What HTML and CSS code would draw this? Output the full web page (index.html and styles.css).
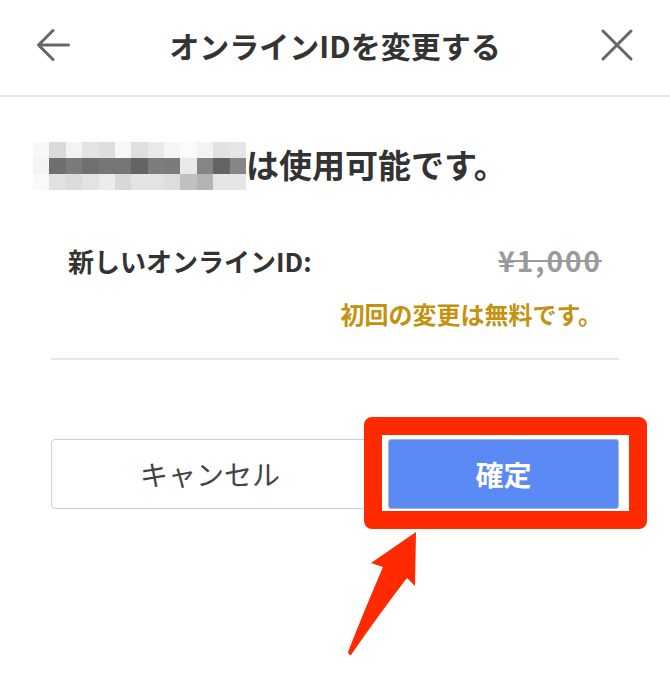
FILE: index.html
```html
<!DOCTYPE html>
<html lang="ja">
<head>
<meta charset="utf-8">
<title>オンラインIDを変更する</title>
<link rel="stylesheet" href="styles.css">
</head>
<body>
<header class="topbar">
  <button class="icon-btn" aria-label="戻る">
    <svg viewBox="0 0 34 34" width="34" height="34" class="icon">
      <path d="M17 2.5 L2.5 17 L17 31.5 M2.5 17 H32.5" />
    </svg>
  </button>
  <h1 class="title">オンラインIDを変更する</h1>
  <button class="icon-btn" aria-label="閉じる">
    <svg viewBox="0 0 34 34" width="34" height="34" class="icon">
      <path d="M3 3 L31 31 M31 3 L3 31" />
    </svg>
  </button>
</header>

<main class="content">
  <div class="avail">
    <svg class="masked-id" viewBox="0 0 13 3" width="213" height="48" preserveAspectRatio="none" shape-rendering="crispEdges" aria-hidden="true">
      <rect x="0" y="0" width="1" height="1" fill="#f8f8f8"/><rect x="1" y="0" width="1" height="1" fill="#dadada"/><rect x="2" y="0" width="1" height="1" fill="#f3f3f3"/><rect x="3" y="0" width="1" height="1" fill="#e4e4e4"/><rect x="4" y="0" width="1" height="1" fill="#dddddd"/><rect x="5" y="0" width="1" height="1" fill="#f7f7f7"/><rect x="6" y="0" width="1" height="1" fill="#dfdfdf"/><rect x="7" y="0" width="1" height="1" fill="#e9e9e9"/><rect x="8" y="0" width="1" height="1" fill="#f5f5f5"/><rect x="9" y="0" width="1" height="1" fill="#fbfbfb"/><rect x="10" y="0" width="1" height="1" fill="#f3f3f3"/><rect x="11" y="0" width="1" height="1" fill="#e2e2e2"/><rect x="12" y="0" width="1" height="1" fill="#e5e5e5"/>
      <rect x="0" y="1" width="1" height="1" fill="#f4f4f4"/><rect x="1" y="1" width="1" height="1" fill="#6f6f6f"/><rect x="2" y="1" width="1" height="1" fill="#7b7b7b"/><rect x="3" y="1" width="1" height="1" fill="#707070"/><rect x="4" y="1" width="1" height="1" fill="#767676"/><rect x="5" y="1" width="1" height="1" fill="#767676"/><rect x="6" y="1" width="1" height="1" fill="#646464"/><rect x="7" y="1" width="1" height="1" fill="#7d7d7d"/><rect x="8" y="1" width="1" height="1" fill="#7b7b7b"/><rect x="9" y="1" width="1" height="1" fill="#e9e9e9"/><rect x="10" y="1" width="1" height="1" fill="#858585"/><rect x="11" y="1" width="1" height="1" fill="#646464"/><rect x="12" y="1" width="1" height="1" fill="#868686"/>
      <rect x="0" y="2" width="1" height="1" fill="#fafafa"/><rect x="1" y="2" width="1" height="1" fill="#e1e1e1"/><rect x="2" y="2" width="1" height="1" fill="#dbdbdb"/><rect x="3" y="2" width="1" height="1" fill="#e3e3e3"/><rect x="4" y="2" width="1" height="1" fill="#ebebeb"/><rect x="5" y="2" width="1" height="1" fill="#d8d8d8"/><rect x="6" y="2" width="1" height="1" fill="#e3e3e3"/><rect x="7" y="2" width="1" height="1" fill="#e3e3e3"/><rect x="8" y="2" width="1" height="1" fill="#dddddd"/><rect x="9" y="2" width="1" height="1" fill="#c0c0c0"/><rect x="10" y="2" width="1" height="1" fill="#b4b4b4"/><rect x="11" y="2" width="1" height="1" fill="#e6e6e6"/><rect x="12" y="2" width="1" height="1" fill="#e6e6e6"/>
    </svg>
    <span class="avail-text">は使用可能です。</span>
  </div>

  <div class="price-row">
    <span class="label">新しいオンラインID:</span>
    <span class="price">¥1,000</span>
  </div>
  <p class="note">初回の変更は無料です。</p>

  <div class="divider"></div>

  <div class="actions">
    <button class="btn btn-cancel">キャンセル</button>
    <button class="btn btn-confirm">確定</button>
    <div class="highlight" aria-hidden="true"></div>
    <svg class="pointer" viewBox="0 0 80 135" width="80" height="135" aria-hidden="true">
      <path d="M76 7 L31 38 L43 42 Q24 86 8 127 Q9 131 11 130 Q40 88 67 53 L75 61 Z" />
    </svg>
  </div>
</main>
</body>
</html>
```

FILE: styles.css
```css
* {
  box-sizing: border-box;
}

html,
body {
  background: #ffffff;
}

body {
  margin: 0;
  width: 670px;
  min-height: 700px;
  color: #333333;
  font-family: "Noto Sans CJK JP", "Noto Sans", sans-serif;
}

.topbar {
  height: 97px;
  border-bottom: 2px solid #e6e6e6;
  display: flex;
  align-items: center;
  justify-content: space-between;
  padding: 0 36px 5px;
}

.icon-btn {
  width: 34px;
  height: 34px;
  padding: 0;
  border: 0;
  background: none;
  display: flex;
}

.icon {
  fill: none;
  stroke: #666666;
  stroke-width: 3;
  stroke-linecap: round;
  stroke-linejoin: round;
}

.title {
  margin: 0;
  font-size: 30px;
  font-weight: 700;
  line-height: 1;
  color: #333333;
}

.content {
  padding: 0 51px 190px;
}

.avail {
  display: flex;
  align-items: center;
  height: 48px;
  margin: 45px 0 0 -18px;
}

.masked-id {
  flex: none;
  display: block;
}

.avail-text {
  font-size: 33px;
  font-weight: 700;
  line-height: 48px;
  color: #333333;
  white-space: nowrap;
  position: relative;
  top: -2px;
}

.price-row {
  display: flex;
  align-items: center;
  justify-content: space-between;
  height: 40px;
  margin-top: 50px;
  padding: 0 17px;
}

.label {
  font-size: 26px;
  font-weight: 700;
  color: #333333;
}

.price {
  font-size: 28px;
  font-weight: 700;
  color: #9a9a9a;
  letter-spacing: 2px;
  text-decoration: line-through;
  text-decoration-thickness: 2px;
}

.note {
  margin: 19px 0 0;
  padding-right: 17px;
  font-size: 24px;
  font-weight: 700;
  line-height: 30px;
  text-align: right;
  color: #c4920f;
}

.divider {
  margin-top: 29px;
  border-top: 2px solid #e8e8e8;
}

.actions {
  position: relative;
  display: flex;
  gap: 19px;
  height: 70px;
  margin-top: 79px;
}

.btn {
  height: 70px;
  padding: 0;
  font-family: inherit;
  font-size: 28px;
  cursor: pointer;
}

.btn-cancel {
  flex: 1;
  background: #ffffff;
  border: 1.5px solid #cfcfcf;
  border-radius: 4px;
  color: #444444;
  font-weight: 400;
}

.btn-confirm {
  flex: none;
  width: 231px;
  background: #5b8af5;
  border: 1px solid #aab6c9;
  border-radius: 3px;
  color: #ffffff;
  font-weight: 700;
}

.highlight {
  position: absolute;
  left: 313px;
  top: -22px;
  width: 283px;
  height: 112px;
  border: 18px solid #ff2a00;
  border-radius: 8px;
}

.pointer {
  position: absolute;
  left: 289px;
  top: 86px;
  fill: #ff2a00;
}
```
